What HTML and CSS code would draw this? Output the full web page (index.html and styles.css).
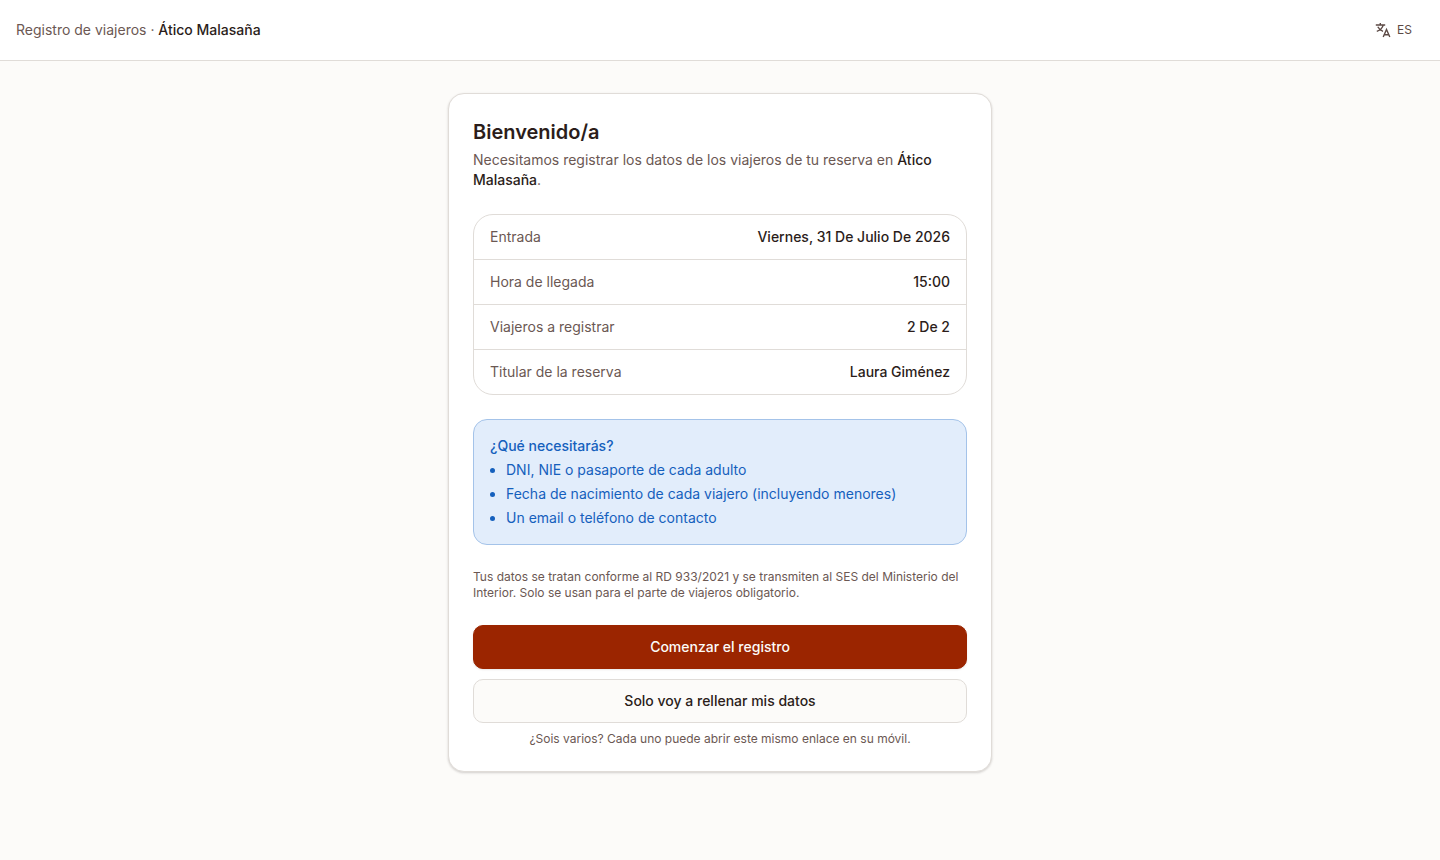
FILE: index.html
```html
<!DOCTYPE html>
<html lang="es">
<head>
  <meta charset="UTF-8" />
  <meta name="viewport" content="width=device-width, initial-scale=1.0"/>
  <title>Registro de viajeros · Ático Malasaña</title>
  <link rel="stylesheet" href="styles.css">
</head>
<body>

  <header class="topbar">
    <p class="topbar-title">Registro de viajeros · <strong>Ático Malasaña</strong></p>
    <button type="button" class="lang-btn" aria-label="Cambiar idioma, ES">
      <svg class="lang-icon" viewBox="0 0 16 16" aria-hidden="true">
        <path d="M5.3 1v2M.8 3h9.4M8.2 3.2C7.6 5.8 5 8.300 1.800 9.300M2.800 4.800C3.800 6.800 5.600 8.400 8 9.300"/>
        <path d="M8.200 15l3.300-7.500 3.300 7.500M9.200 12.700h4.600"/>
      </svg>
      <span>ES</span>
    </button>
  </header>

  <main class="page">
    <section class="card">
      <div class="intro">
        <h1>Bienvenido/a</h1>
        <p>Necesitamos registrar los datos de los viajeros de tu reserva en <strong>Ático Malasaña</strong>.</p>
      </div>

      <dl class="details">
        <div class="row">
          <dt>Entrada</dt>
          <dd>Viernes, 31 De Julio De 2026</dd>
        </div>
        <div class="row">
          <dt>Hora de llegada</dt>
          <dd>15:00</dd>
        </div>
        <div class="row">
          <dt>Viajeros a registrar</dt>
          <dd>2 De 2</dd>
        </div>
        <div class="row">
          <dt>Titular de la reserva</dt>
          <dd>Laura Giménez</dd>
        </div>
      </dl>

      <div class="info">
        <h2>¿Qué necesitarás?</h2>
        <ul>
          <li>DNI, NIE o pasaporte de cada adulto</li>
          <li>Fecha de nacimiento de cada viajero (incluyendo menores)</li>
          <li>Un email o teléfono de contacto</li>
        </ul>
      </div>

      <p class="note">Tus datos se tratan conforme al RD 933/2021 y se transmiten al SES del Ministerio del Interior. Solo se usan para el parte de viajeros obligatorio.</p>

      <div class="actions">
        <div class="buttons">
          <button type="button" class="btn btn-primary">Comenzar el registro</button>
          <button type="button" class="btn btn-outline">Solo voy a rellenar mis datos</button>
        </div>
        <p class="note hint">¿Sois varios? Cada uno puede abrir este mismo enlace en su móvil.</p>
      </div>
    </section>
  </main>

</body>
</html>
```
FILE: styles.css
```css
* {
  box-sizing: border-box;
}

body {
  margin: 0;
  min-height: 100vh;
  font-family: Inter, 'Liberation Sans', sans-serif;
  font-size: 14px;
  line-height: 20px;
  color: #2b1d1a;
  background: #fcfbf9;
}

h1, h2, p, dl, dd, ul {
  margin: 0;
}

strong {
  font-weight: 500;
  color: #2b1d1a;
}

button {
  font: inherit;
  cursor: pointer;
}

/* Header */
.topbar {
  display: flex;
  align-items: center;
  justify-content: space-between;
  padding: 12px 16px;
  background: #fff;
  border-bottom: 1px solid #e0dcd8;
}

.topbar-title {
  color: #6b5853;
}

.lang-btn {
  display: flex;
  align-items: center;
  gap: 6px;
  height: 36px;
  padding: 0 12px;
  border: none;
  border-radius: 8px;
  background: none;
  color: #5c4a45;
  font-size: 12px;
}

.lang-icon {
  width: 16px;
  height: 16px;
  fill: none;
  stroke: currentColor;
  stroke-width: 1.4;
}

/* Card */
.page {
  max-width: 576px;
  margin: 0 auto;
  padding: 32px 16px;
}

.card {
  display: flex;
  flex-direction: column;
  gap: 24px;
  padding: 24px;
  background: #fff;
  border: 1px solid #e0dcd8;
  border-radius: 16px;
  box-shadow: 0 1px 3px rgba(43, 29, 26, 0.1), 0 1px 2px rgba(43, 29, 26, 0.1);
}

.intro {
  display: flex;
  flex-direction: column;
  gap: 4px;
  color: #6b5853;
}

.intro h1 {
  font-size: 20px;
  line-height: 28px;
  font-weight: 600;
  color: #2b1d1a;
}

.details {
  border: 1px solid #e0dcd8;
  border-radius: 20px;
}

.row {
  display: flex;
  justify-content: space-between;
  gap: 16px;
  padding: 12px 16px;
}

.row + .row {
  border-top: 1px solid #e0dcd8;
}

.row dt {
  color: #6b5853;
}

.row dd {
  font-weight: 500;
  text-align: right;
}

/* Info box */
.info {
  padding: 16px;
  background: #e2edfb;
  border: 1px solid #a4c3e9;
  border-radius: 14px;
  color: #1560bd;
}

.info h2 {
  font-size: 14px;
  line-height: 20px;
  font-weight: 500;
}

.info ul {
  padding-left: 16px;
}

.info li {
  margin-top: 4px;
}

.note {
  font-size: 12px;
  line-height: 16px;
  color: #6b5853;
}

/* Buttons */
.actions {
  display: flex;
  flex-direction: column;
  gap: 8px;
}

.buttons {
  display: flex;
  flex-direction: column;
  gap: 10px;
}

.btn {
  height: 44px;
  padding: 0 16px;
  border: 1px solid transparent;
  border-radius: 10px;
  font-weight: 500;
}

.btn-primary {
  background: #9b2500;
  border-color: #9b2500;
  color: #fcfbf9;
  box-shadow: 0 1px 2px rgba(43, 29, 26, 0.1);
}

.btn-outline {
  background: #fcfbf9;
  border-color: #e0dcd8;
  color: #2b1d1a;
}

.hint {
  text-align: center;
}
```
